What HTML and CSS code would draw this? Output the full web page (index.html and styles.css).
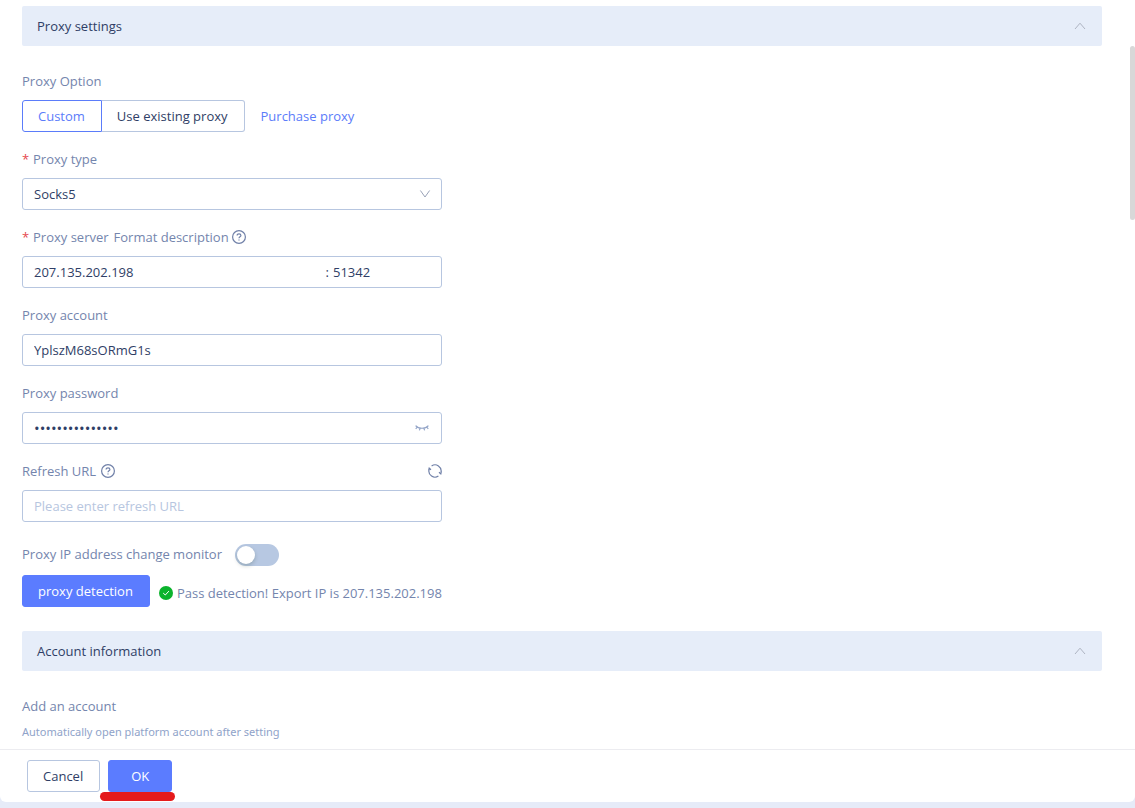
FILE: index.html
```html
<!DOCTYPE html>
<html lang="en">
<head>
    <meta charset="UTF-8">
    <title>Proxy settings</title>
    <link rel="stylesheet" href="styles.css">
</head>
<body>
<form class="panel">
    <div class="content">
        <button type="button" class="section-head">
            <span>Proxy settings</span>
            <svg class="arrow" viewBox="0 0 12 12"><path d="M1 9 6 3.2 11 9"/></svg>
        </button>

        <div class="field">
            <div class="label" id="option-label">Proxy Option</div>
            <div class="option-row">
                <div class="radio-group" role="radiogroup" aria-labelledby="option-label">
                    <label class="radio"><input type="radio" name="option" checked><span>Custom</span></label>
                    <label class="radio"><input type="radio" name="option"><span>Use existing proxy</span></label>
                </div>
                <a href="#">Purchase proxy</a>
            </div>
        </div>

        <div class="field">
            <label class="label required" for="type">Proxy type</label>
            <div class="select-wrap">
                <select class="control" id="type">
                    <option>Socks5</option>
                    <option>HTTP</option>
                    <option>HTTPS</option>
                </select>
                <svg class="arrow" viewBox="0 0 12 12"><path d="M1.4 2.5 6 9 10.6 2.5"/></svg>
            </div>
        </div>

        <div class="field">
            <div class="label required">
                <label for="host">Proxy server</label>
                <span class="format">Format description</span>
                <svg class="icon" viewBox="0 0 14 14"><circle cx="7" cy="7" r="6.4"/><path d="M5.1 5.6c0-1.1.8-1.8 1.9-1.8s1.9.7 1.9 1.7c0 1.3-1.9 1.4-1.9 2.7M7 9.4v1.1"/></svg>
            </div>
            <div class="control server">
                <input type="text" id="host" value="207.135.202.198">
                <span>:</span>
                <input type="text" class="port" aria-label="Port" value="51342">
            </div>
        </div>

        <div class="field">
            <label class="label" for="account">Proxy account</label>
            <input type="text" class="control" id="account" value="YplszM68sORmG1s">
        </div>

        <div class="field">
            <label class="label" for="password">Proxy password</label>
            <div class="control password">
                <input type="password" id="password" value="aaaaaaaaaaaaaaa">
                <button type="button" class="icon-btn" aria-label="Show password">
                    <svg class="eye" viewBox="0 0 14 14"><path d="M.6 4.6C3.6 8.1 10.4 8.1 13.4 4.6M2.3 6.1.7 7.8M5.1 7.2 4.4 9.4M8.9 7.2l.7 2.2M11.7 6.1l1.6 1.7"/></svg>
                </button>
            </div>
        </div>

        <div class="field">
            <div class="label refresh">
                <label for="url">Refresh URL</label>
                <svg class="icon" viewBox="0 0 14 14"><circle cx="7" cy="7" r="6.4"/><path d="M5.1 5.6c0-1.1.8-1.8 1.9-1.8s1.9.7 1.9 1.7c0 1.3-1.9 1.4-1.9 2.7M7 9.4v1.1"/></svg>
                <button type="button" class="icon-btn" aria-label="Refresh">
                    <svg class="icon" viewBox="0 0 14 14"><path d="M3.6 1.9A6.1 6.1 0 0 1 13 8.2M10.4 12.1A6.1 6.1 0 0 1 1 5.8M11 8.2l1.8 1.6.6-2.4M3 5.8 1.2 4.2.6 6.6"/></svg>
                </button>
            </div>
            <input type="text" class="control" id="url" placeholder="Please enter refresh URL">
        </div>

        <div class="monitor">
            <label for="monitor">Proxy IP address change monitor</label>
            <input type="checkbox" class="switch" id="monitor">
        </div>

        <div class="detection">
            <button type="button" class="btn primary">proxy detection</button>
            <div class="result">
                <svg class="check" viewBox="0 0 14 14"><circle cx="7" cy="7" r="7"/><path d="M4.2 7.1 6.3 9 9.9 5.1"/></svg>
                <span>Pass detection! Export IP is 207.135.202.198</span>
            </div>
        </div>

        <button type="button" class="section-head">
            <span>Account information</span>
            <svg class="arrow" viewBox="0 0 12 12"><path d="M1 9 6 3.2 11 9"/></svg>
        </button>

        <div class="label">Add an account</div>
        <p class="tip">Automatically open platform account after setting</p>
        <div class="scrollbar"></div>
    </div>

    <div class="footer">
        <button type="button" class="btn">Cancel</button>
        <div class="ok">
            <button type="submit" class="btn primary">OK</button>
            <div class="marker"></div>
        </div>
    </div>
</form>
</body>
</html>
```

FILE: styles.css
```css
*{
    margin: 0;
    padding: 0;
    box-sizing: border-box;
}
body{
    height: 100vh;
    padding-bottom: 6px;
    background: #e6ebf8;
    color: #2f3e66;
    font: 13px/22px "Open Sans", sans-serif;
}
input, select, button{
    font: inherit;
    color: inherit;
    border: none;
    outline: none;
    background: none;
}
button{
    cursor: pointer;
}
a{
    color: #5b7cfa;
    text-decoration: none;
}
svg{
    display: block;
    flex: none;
    fill: none;
    stroke: currentColor;
}
.panel{
    display: flex;
    flex-direction: column;
    height: 100%;
    background: #fff;
    border-radius: 0 0 6px 6px;
}
.content{
    flex: 1;
    min-height: 0;
    overflow: hidden;
    position: relative;
    padding: 6px 33px 0 22px;
}
.section-head{
    display: flex;
    align-items: center;
    justify-content: space-between;
    width: 100%;
    height: 40px;
    padding: 0 16px 0 15px;
    margin-bottom: 24px;
    background: #e6edf9;
    border-radius: 2px;
}
.arrow{
    width: 12px;
    height: 12px;
    color: #aeb4c2;
}
.field{
    max-width: 420px;
    margin-bottom: 16px;
}
.label{
    display: flex;
    align-items: center;
    height: 22px;
    color: #7485ad;
}
.field .label{
    margin-bottom: 8px;
}
.required::before{
    content: "*";
    width: 11px;
    color: #e5484d;
}
.format{
    margin: 0 3px 0 5px;
}
.icon{
    width: 14px;
    height: 14px;
    color: #7080a8;
    stroke-width: 1.2;
}
.control{
    display: block;
    width: 100%;
    height: 32px;
    padding: 0 11px;
    border: 1px solid #b7c6e0;
    border-radius: 3px;
    background: #fff;
}
.option-row{
    display: flex;
    align-items: center;
    gap: 16px;
}
.radio-group{
    display: flex;
}
.radio input{
    position: absolute;
    opacity: 0;
}
.radio span{
    display: block;
    height: 32px;
    padding: 0 16px 0 15px;
    line-height: 30px;
    border: 1px solid #b7c6e0;
    border-left: none;
    border-radius: 0 3px 3px 0;
    cursor: pointer;
}
.radio:first-child span{
    border-left: 1px solid #b7c6e0;
    border-radius: 3px 0 0 3px;
}
.radio input:checked + span{
    color: #5b7cfa;
    border-color: #5b7cfa;
}
.select-wrap{
    position: relative;
}
.select-wrap select{
    appearance: none;
}
.select-wrap .arrow{
    position: absolute;
    top: 10px;
    right: 11px;
    color: #9aa3b8;
    pointer-events: none;
}
.server, .password{
    display: flex;
    align-items: center;
}
.server input, .password input{
    flex: 1;
    min-width: 0;
}
.server{
    gap: 4px;
}
.server .port{
    flex: none;
    width: 97px;
}
.password input{
    font-size: 15px;
}
.icon-btn{
    display: flex;
}
.eye{
    width: 14px;
    height: 14px;
    margin-right: 1px;
    color: #94a5c8;
    stroke-width: 1.2;
}
.refresh{
    gap: 5px;
}
.refresh .icon-btn{
    margin-left: auto;
}
::placeholder{
    color: #b7c6e0;
    opacity: 1;
}
.monitor{
    display: flex;
    gap: 13px;
    margin: 22px 0 9px;
    color: #7485ad;
    line-height: 20px;
}
.switch{
    appearance: none;
    width: 44px;
    height: 22px;
    padding: 2px;
    border-radius: 11px;
    background: #b7c8e2;
    cursor: pointer;
}
.switch::before{
    content: "";
    display: block;
    width: 18px;
    height: 18px;
    border-radius: 50%;
    background: #fff;
    box-shadow: 0 2px 4px rgba(0, 35, 11, .2);
}
.switch:checked{
    background: #5b7cfa;
}
.switch:checked::before{
    margin-left: auto;
}
.detection{
    display: flex;
    align-items: center;
    gap: 9px;
    margin-bottom: 24px;
    color: #7485ad;
}
.result{
    display: flex;
    align-items: center;
    gap: 4px;
    padding-top: 4px;
}
.check{
    width: 14px;
    height: 14px;
    stroke: #fff;
}
.check circle{
    fill: #0bb32c;
    stroke: none;
}
.btn{
    height: 32px;
    padding: 0 16px 0 15px;
    border: 1px solid #b7c6e0;
    border-radius: 3px;
    color: #2f3e66;
}
.primary{
    color: #fff;
    border-color: #5b7cff;
    background: #5b7cff;
}
.tip{
    margin-top: 5px;
    color: #8fa3c9;
    font: 11px/20px "Noto Sans", sans-serif;
}
.scrollbar{
    position: absolute;
    top: 46px;
    right: 0;
    width: 5px;
    height: 174px;
    border-radius: 3px;
    background: #d8d8d8;
}
.footer{
    display: flex;
    gap: 8px;
    padding: 10px 27px;
    border-top: 1px solid #ececf0;
}
.ok{
    position: relative;
}
.ok .btn{
    padding: 0 22px;
}
.marker{
    position: absolute;
    top: 32px;
    left: -8px;
    right: -3px;
    height: 9px;
    border-radius: 5px;
    background: #e51a1c;
}
```
